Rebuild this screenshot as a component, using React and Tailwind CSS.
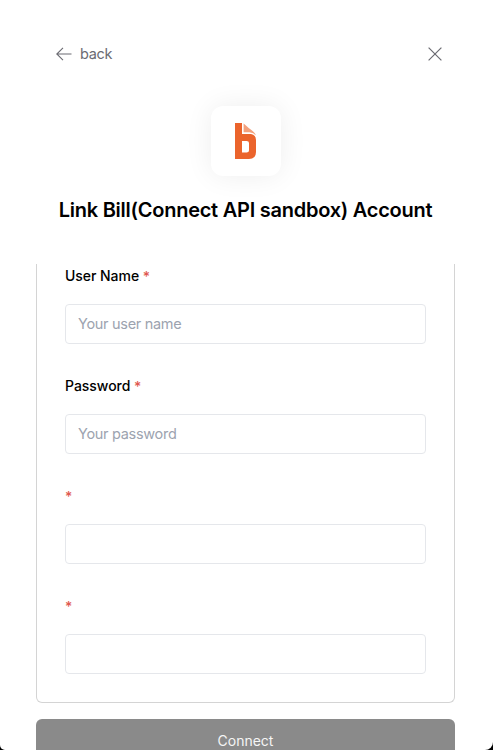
const FIELDS = [
  { id: 'user', label: 'User Name', placeholder: 'Your user name' },
  { id: 'password', label: 'Password', placeholder: 'Your password' },
  { id: 'extra-1', label: '', placeholder: '' },
  { id: 'extra-2', label: '', placeholder: '' },
];

function Header() {
  return (
    <header className="flex h-6 shrink-0 items-center justify-between pl-14 pr-[51px]">
      <button className="flex items-center gap-2 text-[14.5px] leading-6 tracking-[-0.3px] text-[#6b6b72]">
        <svg width="16" height="14" viewBox="0 0 16 14" fill="none" stroke="currentColor" strokeWidth="1.1">
          <path d="M15.5 7H1M7 .8 .8 7 7 13.2" />
        </svg>
        back
      </button>
      <button aria-label="Close" className="text-[#6b6b72]">
        <svg width="14" height="14" viewBox="0 0 14 14" fill="none" stroke="currentColor" strokeWidth="1.2">
          <path d="M.6.6 13.4 13.4M13.4.6.6 13.4" />
        </svg>
      </button>
    </header>
  );
}

function Logo() {
  return (
    <div className="ml-[211px] mt-10 flex size-[70px] shrink-0 items-center justify-center rounded-xl bg-white shadow-[0_0_28px_rgba(0,0,0,0.07)]">
      <svg width="22" height="36" viewBox="0 0 22 36">
        <path
          fill="#eb642c"
          fillRule="evenodd"
          d="M0 0H7V11H16Q21 12 21 17V29Q21 36 14 36H0ZM7 18V29.6H11.6Q14 29.6 14 27.6V20Q14 18 11.6 18Z"
        />
        <path fill="#f3a17d" d="M8.6 .6Q10 2 14 5.2Q20.4 9.5 21 12.6Q18.5 9.5 14.5 9.3H8.6Z" />
      </svg>
    </div>
  );
}

function Field({ label, placeholder }) {
  return (
    <div>
      <label className="block h-6 text-[14px] font-medium leading-6 tracking-[-0.04px] text-black">
        {label && `${label} `}
        <span className="inline-block translate-y-px leading-none text-[#e0584f]">*</span>
      </label>
      <input
        placeholder={placeholder}
        className="mt-4 block h-10 w-[361px] rounded border border-[#e5e7eb] bg-white px-3 pb-px text-[14.5px] tracking-[-0.3px] text-gray-700 placeholder:text-[#9ca3af]"
      />
    </div>
  );
}

export default function App() {
  return (
    <div className="h-[750px] w-[493px] overflow-hidden bg-black font-['Inter',sans-serif]">
      <main className="flex h-full flex-col overflow-hidden rounded-bl-[5px] rounded-br-[8px] bg-white pt-[42px]">
        <Header />
        <Logo />
        <h1 className="mt-5 shrink-0 whitespace-nowrap pr-0.5 text-center text-[20px] font-semibold leading-7 tracking-[-0.25px] text-black">
          Link Bill(Connect API sandbox) Account
        </h1>
        <section className="ml-9 mt-10 flex h-[439px] w-[419px] shrink-0 flex-col gap-[30px] rounded-b-md border border-t-0 border-[#d4d4d4] pl-7">
          {FIELDS.map((field) => (
            <Field key={field.id} label={field.label} placeholder={field.placeholder} />
          ))}
        </section>
        <button className="ml-9 mt-4 h-11 w-[419px] shrink-0 rounded-md bg-[#8a8a8a] pb-0.5 text-[14px] text-[#f5f5f5]">
          Connect
        </button>
      </main>
    </div>
  );
}
